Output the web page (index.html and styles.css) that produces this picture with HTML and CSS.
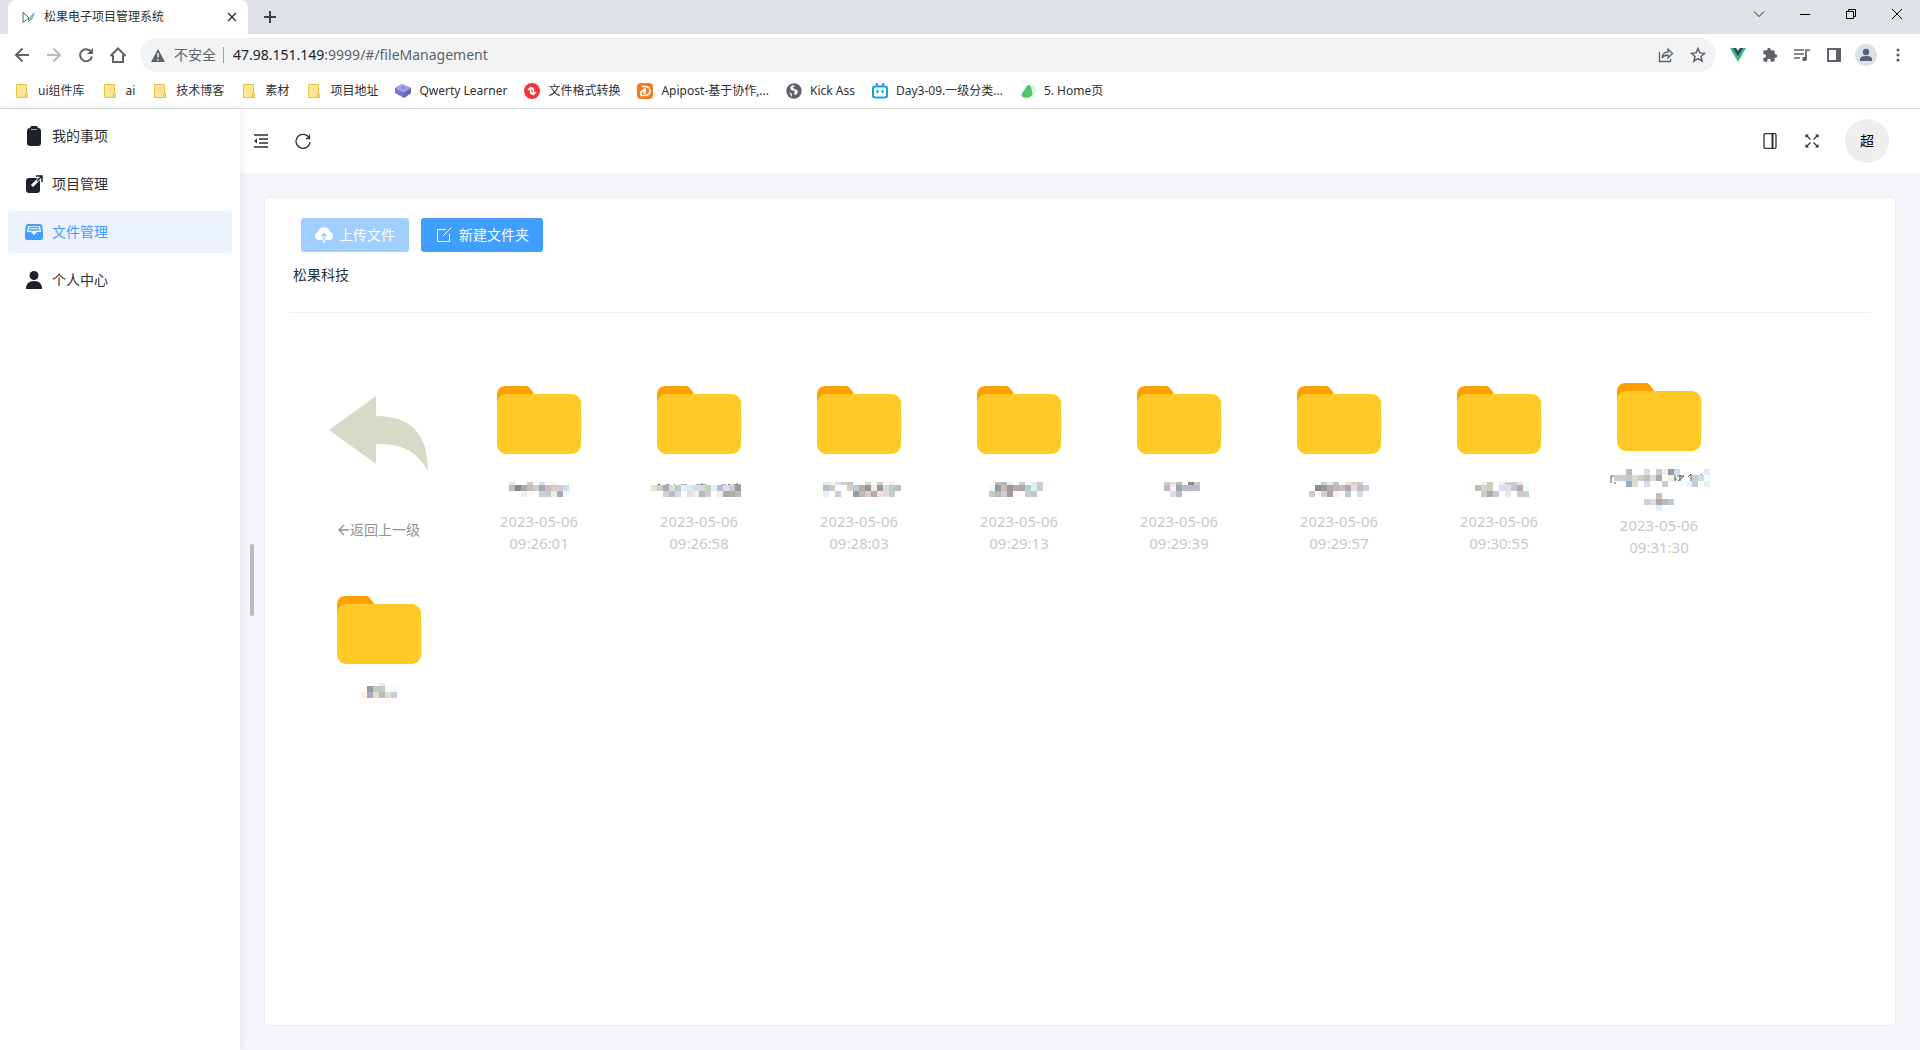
FILE: index.html
```html
<!DOCTYPE html>
<html lang="zh-CN">
<head>
<meta charset="utf-8">
<title>松果电子项目管理系统</title>
<link rel="stylesheet" href="styles.css">
</head>
<body>
<svg class="sprite" aria-hidden="true">
  <symbol id="folder" viewBox="0 0 84 68">
    <path d="M0 20V9Q0 0 9 0H29Q31 0 32 1L38 9V20Z" fill="#ffa000"/>
    <rect y="8" width="84" height="60" rx="9" fill="#ffca28"/>
  </symbol>
  <symbol id="bm-folder" viewBox="0 0 16 16">
    <path d="M2.500 1.500h10v9.500h1v3.500h-11z" fill="#ffe694" stroke="#e8c243"/>
    <path d="M11.500 14v-3h2" fill="none" stroke="#e8c243"/>
  </symbol>
</svg>

<header class="browser">
  <div class="tabs">
    <div class="tab">
      <svg width="16" height="16" viewBox="0 0 16 16" fill="none"><path d="M3 3v10.500l6-4.500M3 3l6 6" stroke="#456577"/><path d="M8 11l6-7-2 6-4 2.500" fill="#a8cbd0" stroke="#6fa3aa"/></svg>
      <span class="tab-title">松果电子项目管理系统</span>
      <button class="tab-close" aria-label="关闭标签页"><svg width="10" height="10" viewBox="0 0 10 10" stroke="#3c4043" stroke-width="1.600"><path d="M1 1l8 8M9 1l-8 8"/></svg></button>
    </div>
    <button class="tab-new" aria-label="新标签页"><svg width="12" height="12" viewBox="0 0 12 12" stroke="#3c4043" stroke-width="2"><path d="M6 0v12M0 6h12"/></svg></button>
    <div class="window-controls">
      <button aria-label="搜索标签页"><svg width="12" height="12" viewBox="0 0 12 12" fill="none" stroke="#222"><path d="M1 3.500l5 5 5-5"/></svg></button>
      <button aria-label="最小化"><svg width="10" height="12" viewBox="0 0 10 12" stroke="#000"><path d="M0 6.500h10"/></svg></button>
      <button aria-label="还原"><svg width="10" height="10" viewBox="0 0 10 10" fill="none" stroke="#000"><path d="M.5 2.500h7v7h-7zM2.500 2.500v-2h7v7h-2"/></svg></button>
      <button aria-label="关闭"><svg width="10" height="10" viewBox="0 0 10 10" stroke="#000"><path d="M0 0l10 10M10 0L0 10"/></svg></button>
    </div>
  </div>

  <div class="toolbar">
    <button aria-label="后退"><svg width="16" height="16" viewBox="0 0 16 16" fill="none" stroke="#5f6368" stroke-width="2"><path d="M15 8H2M8.500 1.500L2 8l6.500 6.500"/></svg></button>
    <button aria-label="前进"><svg width="16" height="16" viewBox="0 0 16 16" fill="none" stroke="#babcbe" stroke-width="2"><path d="M1 8h13M7.500 1.500L14 8l-6.500 6.500"/></svg></button>
    <button aria-label="重新加载"><svg width="16" height="16" viewBox="0 0 16 16"><path d="M13.200 5A6 6 0 1 0 14 9.500" fill="none" stroke="#5f6368" stroke-width="2"/><path d="M15 1v6H9z" fill="#5f6368"/></svg></button>
    <button aria-label="主页"><svg width="16" height="16" viewBox="0 0 16 16" fill="none" stroke="#5f6368" stroke-width="2"><path d="M.5 9L8 1.500 15.500 9M3 8v7h10V8"/></svg></button>
    <div class="omnibox">
      <svg width="14" height="13" viewBox="0 0 14 13"><path d="M7 0l7 13H0z" fill="#5f6368"/><path d="M7 4v4.500M7 10v1.600" stroke="#f1f3f4" stroke-width="1.500"/></svg>
      <span class="insecure">不安全</span>
      <label class="host" for="url">47.98.151.149</label>
      <input id="url" class="url" value=":9999/#/fileManagement">
      <button aria-label="分享"><svg width="16" height="16" viewBox="0 0 16 16" fill="none" stroke="#5f6368" stroke-width="1.300"><path d="M1.500 5v9.500h11V12M4 11c.5-4 3-6 6-6V2l4.500 4.500L10 11V8c-2.500 0-4.500.8-6 3z"/></svg></button>
      <button aria-label="收藏"><svg width="16" height="16" viewBox="0 0 16 16" fill="none" stroke="#5f6368" stroke-width="1.500"><path d="M8 1.500l1.900 4.400 4.700.4-3.600 3.100 1.100 4.700L8 11.600l-4.100 2.500L5 9.400 1.400 6.300l4.700-.4z"/></svg></button>
    </div>
    <div class="extensions">
      <button aria-label="Vue"><svg width="16" height="16" viewBox="0 0 16 16"><path d="M0 1h6l2 3 2-3h6L8 15z" fill="#41b883"/><path d="M3 1h3l2 3 2-3h3L8 9.500z" fill="#35495e"/></svg></button>
      <button aria-label="扩展程序"><svg width="16" height="16" viewBox="0 0 24 24" fill="#5f6368"><path d="M20.500 11H19V7a2 2 0 0 0-2-2h-4V3.500a2.500 2.500 0 0 0-5 0V5H4a2 2 0 0 0-2 2v3.800h1.500a2.700 2.700 0 0 1 0 5.400H2V20a2 2 0 0 0 2 2h3.800v-1.500a2.700 2.700 0 0 1 5.400 0V22H17a2 2 0 0 0 2-2v-4h1.500a2.500 2.500 0 0 0 0-5z"/></svg></button>
      <button aria-label="媒体控制"><svg width="16" height="16" viewBox="0 0 16 16"><path d="M0 3h10M0 7h10M0 11h6M12 12V3h4" fill="none" stroke="#5f6368" stroke-width="1.700"/><circle cx="10.600" cy="12" r="2.300" fill="#5f6368"/></svg></button>
      <button aria-label="侧边栏"><svg width="14" height="14" viewBox="0 0 14 14"><path d="M1 1h12v12H1z" fill="none" stroke="#5f6368" stroke-width="2"/><path d="M9 1h4v12H9z" fill="#5f6368"/></svg></button>
      <button aria-label="用户"><svg width="22" height="22" viewBox="0 0 22 22"><circle cx="11" cy="11" r="11" fill="#dee1e6"/><circle cx="11" cy="8" r="3.200" fill="#56627a"/><path d="M5 17v-2q0-3 6-3t6 3v2z" fill="#56627a"/></svg></button>
      <button aria-label="菜单"><svg width="4" height="14" viewBox="0 0 4 14" fill="#5f6368"><circle cx="2" cy="2" r="1.600"/><circle cx="2" cy="7" r="1.600"/><circle cx="2" cy="12" r="1.600"/></svg></button>
    </div>
  </div>

  <nav class="bookmarks" aria-label="书签">
    <a href="#"><svg><use href="#bm-folder"/></svg>ui组件库</a>
    <a href="#"><svg><use href="#bm-folder"/></svg>ai</a>
    <a href="#"><svg><use href="#bm-folder"/></svg>技术博客</a>
    <a href="#"><svg><use href="#bm-folder"/></svg>素材</a>
    <a href="#"><svg><use href="#bm-folder"/></svg>项目地址</a>
    <a href="#"><svg viewBox="0 0 16 16"><path d="M0 5l7-4 9 4v5l-7 5-9-5z" fill="#7577cc"/><path d="M0 5l7-4 9 4-7 4.500z" fill="#a4a6ee"/><path d="M16 5l-7 4.500V15l7-5z" fill="#6668b0"/><path d="M5 5l3-2 3 2-3 1.500z" fill="#8486d8"/></svg>Qwerty Learner</a>
    <a href="#"><svg viewBox="0 0 16 16"><circle cx="8" cy="8" r="8" fill="#f5333a"/><path d="M4 7l2.500-2.500L9 7M6.500 5v3.500q0 2.500 2 2.500M12 9l-2.500 2.500L7 9M9.500 11V7.500Q9.500 5 7.500 5" fill="none" stroke="#fff" stroke-width="1.500"/></svg>文件格式转换</a>
    <a href="#"><svg viewBox="0 0 16 16"><rect width="16" height="16" rx="4" fill="#f47a1c"/><path d="M5 3.500h3.500a4.500 4.500 0 0 1 0 9H4V9l4-3v4H6" fill="none" stroke="#fff" stroke-width="1.600"/></svg>Apipost-基于协作,...</a>
    <a href="#"><svg viewBox="0 0 16 16"><circle cx="8" cy="8" r="7.700" fill="#5f6368"/><path d="M7 2l-3 2 1 3 4 1-1 3 2 1 2-3-1-2-3-1-1-2 2-1zM3 9l3 2v3z" fill="#fff"/></svg>Kick Ass</a>
    <a href="#"><svg viewBox="0 0 16 16" fill="none" stroke="#12a5dc" stroke-width="2"><path d="M4 0l2 3M12 0l-2 3"/><rect x="1" y="3.500" width="14" height="11" rx="2"/><path d="M5.500 7v3M10.500 7v3"/></svg>Day3-09.一级分类...</a>
    <a href="#"><svg viewBox="0 0 16 16"><circle cx="10" cy="7" r="6" fill="#e0f6e6"/><path d="M9 2c2 0 2 3 3 6s0 7-5 7-7-3-4-6 3-7 6-7z" fill="#4fca68"/></svg>5. Home页</a>
  </nav>
</header>

<div class="app">
  <aside class="sidebar">
    <nav>
      <a href="#"><svg viewBox="0 0 20 20"><rect x="3" y="2" width="14" height="18" rx="3" fill="#1d2129"/><rect x="6" y="0" width="8" height="5" rx="2" fill="#1d2129"/><path d="M7 3.500h6" stroke="#aaa"/></svg>我的事项</a>
      <a href="#"><svg viewBox="0 0 20 20"><rect x="2" y="4" width="14" height="15" rx="3" fill="#1d2129"/><path d="M8 12l9-9" stroke="#fff" stroke-width="3"/><path d="M13 7l5-5M12 2h6v6" fill="none" stroke="#1d2129" stroke-width="1.500"/></svg>项目管理</a>
      <a href="#" class="active"><svg viewBox="0 0 20 20"><path d="M4 2h12q2 0 2.300 2L19 11v5q0 2-2 2H3q-2 0-2-2v-5l.7-7Q2 2 4 2z" fill="#409eff"/><path d="M4 4h12l1 6h-4l-3 3-3-3H3z" fill="#fff"/><path d="M5 5.500h10M4.500 8h11" stroke="#409eff" stroke-width="1.300"/></svg>文件管理</a>
      <a href="#"><svg viewBox="0 0 20 20" fill="#1d2129"><circle cx="10" cy="5.500" r="4.500"/><path d="M2 19q0-8 8-8t8 8z"/></svg>个人中心</a>
    </nav>
  </aside>

  <main class="main">
    <div class="handle"></div>
    <div class="app-bar">
      <button aria-label="折叠菜单"><svg viewBox="0 0 16 16" fill="none" stroke="#303133" stroke-width="1.300"><path d="M1 2h14M6 6h9M6 10h9M1 14h14"/><path d="M4 5.500v5L1 8z" fill="#303133" stroke="none"/></svg></button>
      <button aria-label="刷新"><svg viewBox="0 0 16 16" fill="none" stroke="#303133" stroke-width="1.300"><path d="M14.200 5A7 7 0 1 0 15 9M14.500 1.500V5.500H11"/></svg></button>
      <span class="spacer"></span>
      <button aria-label="布局"><svg viewBox="0 0 16 16" fill="none" stroke="#303133" stroke-width="1.300"><rect x="2" y=".7" width="12" height="14.600" rx="1"/><path d="M10.500 1v14" stroke-width="2"/></svg></button>
      <button aria-label="全屏"><svg viewBox="0 0 16 16" stroke="#303133" stroke-width="1.200" fill="#303133"><path d="M2 2l4.500 4.500M14 2L9.500 6.500M2 14l4.500-4.500M14 14L9.500 9.500"/><path d="M1.500 1.500h3.500l-3.500 3.500zM14.500 1.500H11l3.500 3.500zM1.500 14.500H5l-3.500-3.500zM14.500 14.500H11l3.500-3.500z" stroke="none"/></svg></button>
      <button class="avatar">超</button>
    </div>

    <section class="card">
      <div class="actions">
        <button class="btn" disabled><svg viewBox="0 0 18 18"><path d="M4 14a4 4 0 0 1-1-7.900 6 6 0 0 1 11.800 0A4 4 0 0 1 14 14z" fill="#fff"/><path d="M9 15V8M6.500 10L9 7.500l2.500 2.500" fill="none" stroke="#a0cfff" stroke-width="1.500"/><path d="M9 14v3" stroke="#fff" stroke-width="1.500"/></svg>上传文件</button>
        <button class="btn"><svg viewBox="0 0 18 18" fill="none" stroke="#fff"><path d="M11 3.500H2.500v12h12V8M8 10l8.500-8.500"/></svg>新建文件夹</button>
      </div>
      <div class="crumb">松果科技</div>
      <hr>
      <ul class="files">
        <li class="back">
          <svg class="back-arrow" viewBox="0 0 100 76"><path d="M0 34L47 0v20c33 0 52 16 52 55C86 54 74 48 47 48v20z" fill="#d8d9c9"/></svg>
          <a href="#"><svg width="12" height="12" viewBox="0 0 12 12" fill="none" stroke="#909399" stroke-width="1.300"><path d="M11 6H1M6 1L1 6l5 5"/></svg>返回上一级</a>
        </li>
        <li><svg class="folder"><use href="#folder"/></svg><div class="name"><svg class="mosaic" data-cells="edd - - ccb - dde - fee - eff/bbb 888 aaa cbb ccd aaa cbc dcb ccd cde/- fff eef - - ccd ccc eed aab eff"></svg></div><time>2023-05-06<br>09:26:01</time></li>
        <li><svg class="folder"><use href="#folder"/></svg><div class="name"><svg class="mosaic fragments" data-cells="-/edc ccc aab ddc bcc def cef ddd cde ccb def bbc dde ccc 99a -/ffe - dcc bbc cde - edd eee bbb ccc - eee aaa baa bbb -"><path d="M5 5l3-3 3 3M14 5V3h5M23 2l3 3M30 3h6M38 5l2-2M45 3h10M51 1v4M70 3h5M77 2l4 2M82 3h8M86 1v4" fill="none" stroke="#666"/></svg></div><time>2023-05-06<br>09:26:58</time></li>
        <li><svg class="folder"><use href="#folder"/></svg><div class="name"><svg class="mosaic" data-cells="- dee fee dde ccc bcb - - ddd ffe ccc - eee -/- bbc ccb - - dcc bcc baa 999 eed 99a ddc bcc bbc/ffe def - ccc - - 99a bba dcc baa fdd dde ccb -"></svg></div><time>2023-05-06<br>09:28:03</time></li>
        <li><svg class="folder"><use href="#folder"/></svg><div class="name"><svg class="mosaic" data-cells="- bbb abb eef - ccc - dee ccc eff/dff 999 cba 999 baa aaa bcc dee ccc -/ccb bbb ccd a99 - - ccc bcc - -"></svg></div><time>2023-05-06<br>09:29:13</time></li>
        <li><svg class="folder"><use href="#folder"/></svg><div class="name"><svg class="mosaic" data-cells="- ccc edd bbb - 889 ccc/- bbc fee 9aa bbc bbb bbc/- - dde bbc fff - -"></svg></div><time>2023-05-06<br>09:29:39</time></li>
        <li><svg class="folder"><use href="#folder"/></svg><div class="name"><svg class="mosaic" data-cells="- eff ccc dee cbb fff edd dcc ccc -/- 889 999 baa bbc cbb aab edd cbb ccd/ccc - dcc aaa fed - bcc - cde -"></svg></div><time>2023-05-06<br>09:29:57</time></li>
        <li><svg class="folder"><use href="#folder"/></svg><div class="name"><svg class="mosaic" data-cells="- - eee ccb - eef ccc ccd edd fff/ffe bbb dcc ccb - dde edd bcc baa eff/- - ccc aaa bcd - dee - ccc ccd"></svg></div><time>2023-05-06<br>09:30:55</time></li>
        <li><svg class="folder"><use href="#folder"/></svg><div class="name"><svg class="mosaic fragments tall" data-cells="- - - bbb - - ddd - ccc eee 999 cde - - - - dee/- ccc ccc bcc ddc ccc cbb ddd aaa ffe eee - - - ccc cde eff/- - - 9ab ddc - cde - - ccc - - eff eef bcd - eee/-/- - - - - - - - cbb - - - - - - - -/- - - - - - dcc dde aaa bbb bcd - - - - - -/- - - - - - - - def - - - - - - - -"><path d="M3 7v7M3 7h4M7 13v2M60 7h8M60 9h8v2h-8M72 6v6M69 7h7M70 12l6-5M80 8l3-3v7M85 6v5M89 9l5-4" fill="none" stroke="#555"/></svg></div><time>2023-05-06<br>09:31:30</time></li>
        <li class="undated"><svg class="folder"><use href="#folder"/></svg><div class="name"><svg class="mosaic" data-cells="- - - eee - -/- 99a bcb bcc ffe eff/fed aab ddc bba ddd ccd"></svg></div></li>
      </ul>
    </section>
  </main>
</div>
<script src="mosaic.js"></script>
</body>
</html>
```

FILE: styles.css
```css
* { box-sizing: border-box; }

body {
  margin: 0;
  min-height: 100vh;
  display: flex;
  flex-direction: column;
  font: 14px/22px "Noto Sans", "Noto Sans CJK SC", sans-serif;
  color: #303133;
  background: #fff;
}

button {
  display: flex;
  align-items: center;
  justify-content: center;
  flex: none;
  padding: 0;
  border: 0;
  background: none;
  font: inherit;
  color: inherit;
}

a { color: inherit; text-decoration: none; }
svg { flex: none; }
.sprite { position: absolute; width: 0; height: 0; }

/* Browser frame */
.browser { border-bottom: 1px solid #dadce0; }

.tabs {
  display: flex;
  height: 34px;
  padding-left: 8px;
  background: #dee1e6;
}

.tab {
  display: flex;
  align-items: center;
  width: 240px;
  height: 34px;
  padding: 0 8px 0 12px;
  gap: 8px;
  border-radius: 8px 8px 0 0;
  background: #fff;
  font-size: 12px;
}

.tab-title { flex: 1; }
.tab-close { width: 16px; height: 16px; }
.tab-new { width: 44px; height: 34px; }
.window-controls { display: flex; margin-left: auto; }
.window-controls button { width: 46px; height: 28px; }

.toolbar {
  display: flex;
  align-items: center;
  height: 42px;
  padding: 0 6px;
}

.toolbar button { width: 32px; height: 32px; }

.omnibox {
  display: flex;
  align-items: center;
  flex: 1;
  height: 34px;
  margin: 0 6px;
  padding: 0 2px 0 11px;
  border-radius: 17px;
  background: #f1f3f4;
  color: #5f6368;
}

.insecure { margin: 0 7px 0 9px; }

.host {
  padding-left: 9px;
  border-left: 1px solid #9aa0a6;
  line-height: 16px;
  color: #202124;
}

.url {
  flex: 1;
  min-width: 0;
  padding: 0;
  border: 0;
  background: none;
  font: inherit;
  color: #5f6368;
}

.extensions { display: flex; }

.bookmarks {
  display: flex;
  align-items: center;
  height: 32px;
  padding: 0 14px 2px;
  gap: 17px;
  font-size: 12px;
  white-space: nowrap;
}

.bookmarks a { display: flex; align-items: center; gap: 8px; }
.bookmarks svg { width: 16px; height: 16px; }

/* Application */
.app { display: flex; flex: 1; }

.sidebar {
  flex: none;
  width: 240px;
  padding: 6px 8px;
  box-shadow: 0 0 10px #0000001a;
  z-index: 1;
}

.sidebar nav { display: flex; flex-direction: column; gap: 6px; }

.sidebar a {
  display: flex;
  align-items: center;
  height: 42px;
  padding: 0 16px;
  gap: 8px;
  border-radius: 4px;
}

.sidebar svg { width: 20px; height: 20px; }
.sidebar .active { background: #ecf3ff; color: #409eff; }

.main {
  position: relative;
  display: flex;
  flex-direction: column;
  flex: 1;
  min-width: 0;
  background: #f5f6f9;
}

.handle {
  position: absolute;
  left: 10px;
  top: 50%;
  width: 4px;
  height: 72px;
  margin-top: -36px;
  border-radius: 2px;
  background: #bbb;
}

.app-bar {
  display: flex;
  align-items: center;
  height: 64px;
  padding: 0 31px 0 0;
  background: #fff;
}

.app-bar button { width: 42px; height: 42px; }
.app-bar svg { width: 16px; height: 16px; }
.spacer { flex: 1; }

.app-bar .avatar {
  width: 44px;
  height: 44px;
  margin-left: 12px;
  border-radius: 50%;
  background: #eee;
  color: #000;
}

.card {
  flex: 1;
  margin: 24px;
  padding: 20px 24px;
  border: 1px solid #ebeef5;
  border-radius: 4px;
  background: #fff;
}

.actions { display: flex; gap: 12px; padding-left: 12px; }

.btn {
  height: 34px;
  padding: 0 14px;
  gap: 6px;
  border-radius: 3px;
  background: #409eff;
  color: #fff;
}

.btn:disabled { background: #a0cfff; }
.btn svg { width: 18px; height: 18px; }
.crumb { padding: 12px 4px 26px; }
hr { height: 1px; margin: 0; border: 0; background: #ebeef5; }

.files {
  display: flex;
  flex-wrap: wrap;
  margin: 56px 0 0;
  padding: 0 10px;
  list-style: none;
}

.files li {
  display: flex;
  flex-direction: column;
  align-items: center;
  justify-content: center;
  width: 160px;
  min-height: 156px;
  text-align: center;
}

.files li:not(.undated) { height: 202px; }
.files .back { padding-bottom: 4px; }
.folder { width: 84px; height: 68px; }

.name {
  display: flex;
  align-items: center;
  min-height: 56px;
  padding-top: 15px;
}

.mosaic { display: block; overflow: visible; }
.mosaic.tall { margin: 3px 0; }
.undated .name { min-height: 38px; }
time { font-size: 15px; color: #c8c9cc; }
.back-arrow { width: 100px; height: 76px; margin-bottom: 47px; }

.back a {
  display: flex;
  align-items: center;
  color: #909399;
}
```

FILE: mosaic.js
```js
// Draws each masked file name as a grid of 6px blocks from its colour rows.
const SIZE = 6;
const NS = "http://www.w3.org/2000/svg";

for (const svg of document.querySelectorAll(".mosaic")) {
  const rows = svg.dataset.cells.split("/").map((row) => row.split(" "));
  const columns = Math.max(...rows.map((row) => row.length));
  // The top row is clipped to half height unless the name spans two lines.
  const full = svg.classList.contains("tall");
  const cut = full ? 0 : 3;
  const height = rows.length * SIZE - cut;
  svg.setAttribute("width", columns * SIZE);
  svg.setAttribute("height", height);
  rows.forEach((row, y) => row.forEach((color, x) => {
    if (color === "-") return;
    const rect = document.createElementNS(NS, "rect");
    const top = Math.max(0, y * SIZE - cut);
    rect.setAttribute("x", x * SIZE);
    rect.setAttribute("y", top);
    rect.setAttribute("width", SIZE);
    rect.setAttribute("height", (y + 1) * SIZE - cut - top);
    rect.setAttribute("fill", "#" + color);
    svg.append(rect);
  }));
}
```
